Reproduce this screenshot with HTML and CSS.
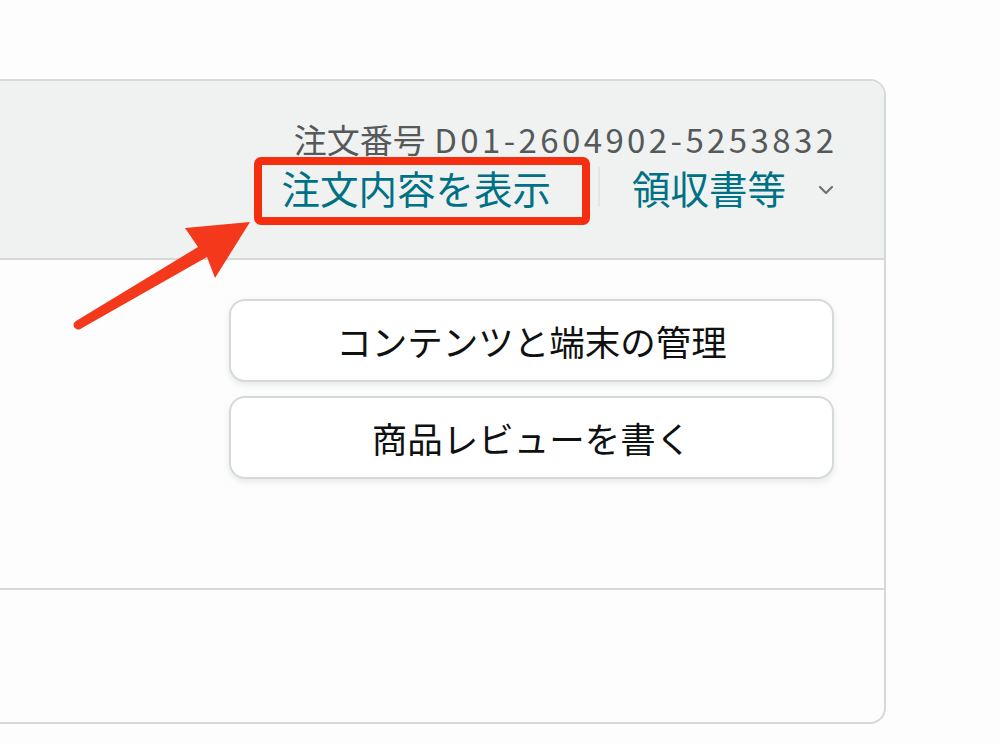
FILE: index.html
```html
<!DOCTYPE html>
<html lang="ja">
<head>
<meta charset="utf-8">
<title>注文</title>
<link rel="stylesheet" href="styles.css">
</head>
<body>
<div class="page">
  <div class="card">
    <div class="card-head">
      <div class="order-no">注文番号 <span class="num">D01-2604902-5253832</span></div>
      <div class="links">
        <a class="link">注文内容を表示</a>
        <span class="sep"></span>
        <a class="link">領収書等</a>
        <svg class="chev" width="16" height="10" viewBox="0 0 16 10"><path d="M2 2 L8 8 L14 2" fill="none" stroke="#6f7373" stroke-width="2.2" stroke-linecap="round" stroke-linejoin="round"/></svg>
      </div>
    </div>
    <div class="card-body">
      <div class="actions">
        <button class="btn">コンテンツと端末の管理</button>
        <button class="btn">商品レビューを書く</button>
      </div>
    </div>
    <div class="card-foot"></div>
  </div>
  <div class="highlight"></div>
  <svg class="arrow" width="200" height="120" viewBox="0 0 200 120">
    <path d="M15 118 C13 116 13 113 16 111 L138 37 L125 18 L190 12 L155 68 L147 47 L22 118 C19 120 17 120 15 118 Z" fill="#f4381b"/>
  </svg>
</div>
</body>
</html>
```

FILE: styles.css
```css
* { box-sizing: border-box; }
html, body { margin: 0; padding: 0; background: #fdfdfd; }
body { font-family: "Noto Sans CJK JP", "Noto Sans", sans-serif; }
.page { position: relative; width: 1000px; height: 744px; overflow: hidden; padding-top: 79px; }
.card {
  margin-left: -40px;
  width: 926px;
  height: 645px;
  border: 2px solid #d5d9d9;
  border-radius: 16px;
  overflow: hidden;
  display: flex;
  flex-direction: column;
  background: #fdfdfd;
}
.card-head {
  background: #f0f2f2;
  height: 179px;
  border-bottom: 2px solid #d5d9d9;
  display: flex;
  flex-direction: column;
  align-items: flex-end;
  padding: 37px 50px 0 0;
  white-space: nowrap;
}
.order-no { font-size: 33px; line-height: 43px; color: #565959; white-space: nowrap; }
.order-no .num { letter-spacing: 3.4px; margin-right: -3.4px; margin-left: 1px; }
.links { display: flex; align-items: center; height: 52px; white-space: nowrap; }
.link { color: #007185; font-size: 38.5px; line-height: 50px; }
.sep { width: 2px; height: 40px; background: #e3e6e6; margin: 0 32px 0 47px; }
.chev { margin-left: 32px; margin-top: 6px; }
.card-body {
  height: 330px;
  border-bottom: 2px solid #d5d9d9;
  padding: 39px 50px 0 0;
  display: flex;
  justify-content: flex-end;
}
.actions { display: flex; flex-direction: column; gap: 14px; width: 605px; }
.btn {
  height: 83px;
  border: 2px solid #d5d9d9;
  border-radius: 16px;
  background: #fff;
  box-shadow: 0 3px 6px rgba(213, 217, 217, 0.55);
  font-family: "Noto Sans CJK JP", sans-serif;
  font-size: 35.5px;
  color: #0f1111;
  padding: 0;
}
.card-foot { flex: 1; }
.highlight {
  position: absolute;
  left: 254px;
  top: 157px;
  width: 336px;
  height: 68px;
  border: 8px solid #f52e10;
  border-radius: 7px;
}
.arrow { position: absolute; left: 60px; top: 210px; }
```
